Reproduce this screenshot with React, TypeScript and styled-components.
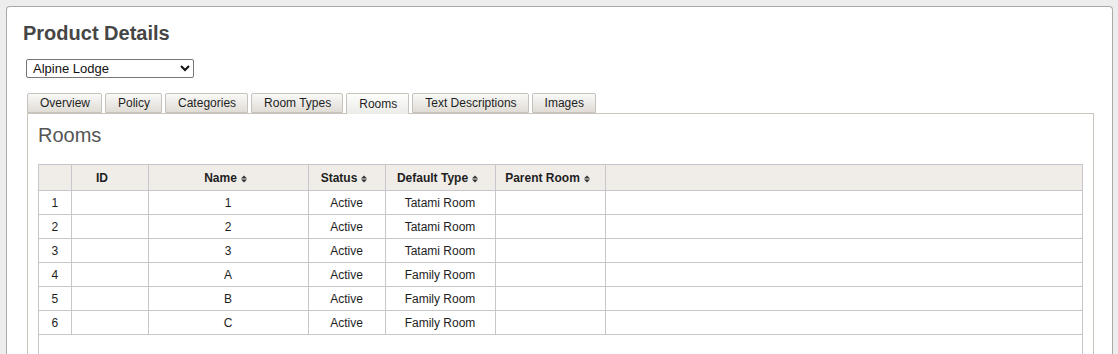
import styled, { createGlobalStyle } from 'styled-components';

const GlobalStyle = createGlobalStyle`
    html, body {
        margin: 0;
        padding: 0;
        background: #ededed;
        font-family: "Liberation Sans", Arial, sans-serif;
        overflow: hidden;
    }
`;

const Page = styled.div`
    padding: 6px 5px 0 6px;
`;

const Card = styled.div`
    background: #fff;
    border: 1px solid #a9a9a9;
    border-bottom: none;
    border-radius: 4px 4px 0 0;
    padding: 15px 18px 40px 16px;
    min-height: 360px;
`;

const Title = styled.h1`
    margin: 0;
    font-size: 20px;
    line-height: 23px;
    font-weight: bold;
    color: #464646;
`;

const ProductSelect = styled.select`
    display: block;
    margin: 14px 0 0 3px;
    width: 168px;
    height: 19px;
    font-family: "Liberation Sans", Arial, sans-serif;
    font-size: 13px;
    color: #111;
    background: #fff;
    border: 1px solid #767676;
    border-radius: 2px;
    padding: 0 2px;
`;

const Tabs = styled.div`
    margin: 15px 0 0 4px;
`;

const TabBar = styled.ul`
    list-style: none;
    margin: 0;
    padding: 0;
    display: flex;
    gap: 3px;
    position: relative;
    z-index: 1;
`;

const Tab = styled.li<{ $active?: boolean }>`
    box-sizing: border-box;
    height: ${(p) => (p.$active ? '21px' : '20px')};
    margin-bottom: ${(p) => (p.$active ? '-1px' : '0')};
    padding: ${(p) => (p.$active ? '3px 11px 0 12px' : '2px 11px 0 12px')};
    border: 1px solid #c6c3bd;
    border-bottom: ${(p) => (p.$active ? 'none' : '1px solid #c6c3bd')};
    border-radius: 2px 2px 0 0;
    background: ${(p) =>
        p.$active
            ? 'linear-gradient(#fdfdfc, #ebebe8)'
            : 'linear-gradient(#f9f9f8, #e0dcd5)'};
    font-size: 12px;
    line-height: 15px;
    color: #1e1e1e;
    white-space: nowrap;
`;

const Panel = styled.div`
    border: 1px solid #c9c4bc;
    border-bottom: none;
    padding: 10px 10px 0;
    min-height: 260px;
`;

const PanelTitle = styled.h2`
    margin: 0;
    font-size: 20px;
    line-height: 23px;
    font-weight: normal;
    color: #555;
`;

const GridWrap = styled.div`
    margin-top: 17px;
    border: 1px solid #c8c6cb;
    border-bottom: none;
    min-height: 200px;
`;

const Grid = styled.table`
    width: 100%;
    border-collapse: collapse;
    table-layout: fixed;
    font-size: 12px;
    color: #1e1e1e;
`;

const HeadCell = styled.th<{ $padRight?: number }>`
    height: 25px;
    padding: 0 ${(p) => p.$padRight ?? 4}px 0 4px;
    background: #f0ede8;
    border-left: 1px solid #c8c6cb;
    border-bottom: 1px solid #c8c6cb;
    font-weight: bold;
    text-align: center;
    vertical-align: middle;
    white-space: nowrap;
    &:first-child {
        border-left: none;
    }
`;

const Cell = styled.td`
    height: 23px;
    padding: 0 4px;
    border-left: 1px solid #c8c6cb;
    border-bottom: 1px solid #c8c6cb;
    text-align: center;
    vertical-align: middle;
    white-space: nowrap;
    &:first-child {
        border-left: none;
    }
`;

const SortIcon = styled.svg`
    margin-left: 4px;
    vertical-align: -1px;
`;

const Sort = () => (
    <SortIcon width="6" height="8" viewBox="0 0 6 8">
        <polygon points="0,3.5 3,0.5 6,3.5" fill="#333" />
        <polygon points="0,4.5 6,4.5 3,7.5" fill="#333" />
    </SortIcon>
);

const tabs = ['Overview', 'Policy', 'Categories', 'Room Types', 'Rooms', 'Text Descriptions', 'Images'];

const columns = [
    { label: '', width: 32, sortable: false, pad: 4 },
    { label: 'ID', width: 77, sortable: false, pad: 19 },
    { label: 'Name', width: 160, sortable: true, pad: 9 },
    { label: 'Status', width: 77, sortable: true, pad: 9 },
    { label: 'Default Type', width: 110, sortable: true, pad: 9 },
    { label: 'Parent Room', width: 110, sortable: true, pad: 9 },
    { label: '', width: undefined, sortable: false, pad: 4 },
];

const rooms = [
    { name: '1', status: 'Active', type: 'Tatami Room' },
    { name: '2', status: 'Active', type: 'Tatami Room' },
    { name: '3', status: 'Active', type: 'Tatami Room' },
    { name: 'A', status: 'Active', type: 'Family Room' },
    { name: 'B', status: 'Active', type: 'Family Room' },
    { name: 'C', status: 'Active', type: 'Family Room' },
];

export default function App() {
    return (
        <>
            <GlobalStyle />
            <Page>
                <Card>
                    <Title>Product Details</Title>
                    <ProductSelect defaultValue="alpine">
                        <option value="alpine">Alpine Lodge</option>
                    </ProductSelect>
                    <Tabs>
                        <TabBar>
                            {tabs.map((t) => (
                                <Tab key={t} $active={t === 'Rooms'}>
                                    {t}
                                </Tab>
                            ))}
                        </TabBar>
                        <Panel>
                            <PanelTitle>Rooms</PanelTitle>
                            <GridWrap>
                                <Grid>
                                    <colgroup>
                                        {columns.map((c, i) => (
                                            <col key={i} style={c.width ? { width: c.width } : undefined} />
                                        ))}
                                    </colgroup>
                                    <thead>
                                        <tr>
                                            {columns.map((c, i) => (
                                                <HeadCell key={i} $padRight={c.pad}>
                                                    {c.label}
                                                    {c.sortable && <Sort />}
                                                </HeadCell>
                                            ))}
                                        </tr>
                                    </thead>
                                    <tbody>
                                        {rooms.map((r, i) => (
                                            <tr key={i}>
                                                <Cell>{i + 1}</Cell>
                                                <Cell />
                                                <Cell>{r.name}</Cell>
                                                <Cell>{r.status}</Cell>
                                                <Cell>{r.type}</Cell>
                                                <Cell />
                                                <Cell />
                                            </tr>
                                        ))}
                                    </tbody>
                                </Grid>
                            </GridWrap>
                        </Panel>
                    </Tabs>
                </Card>
            </Page>
        </>
    );
}
